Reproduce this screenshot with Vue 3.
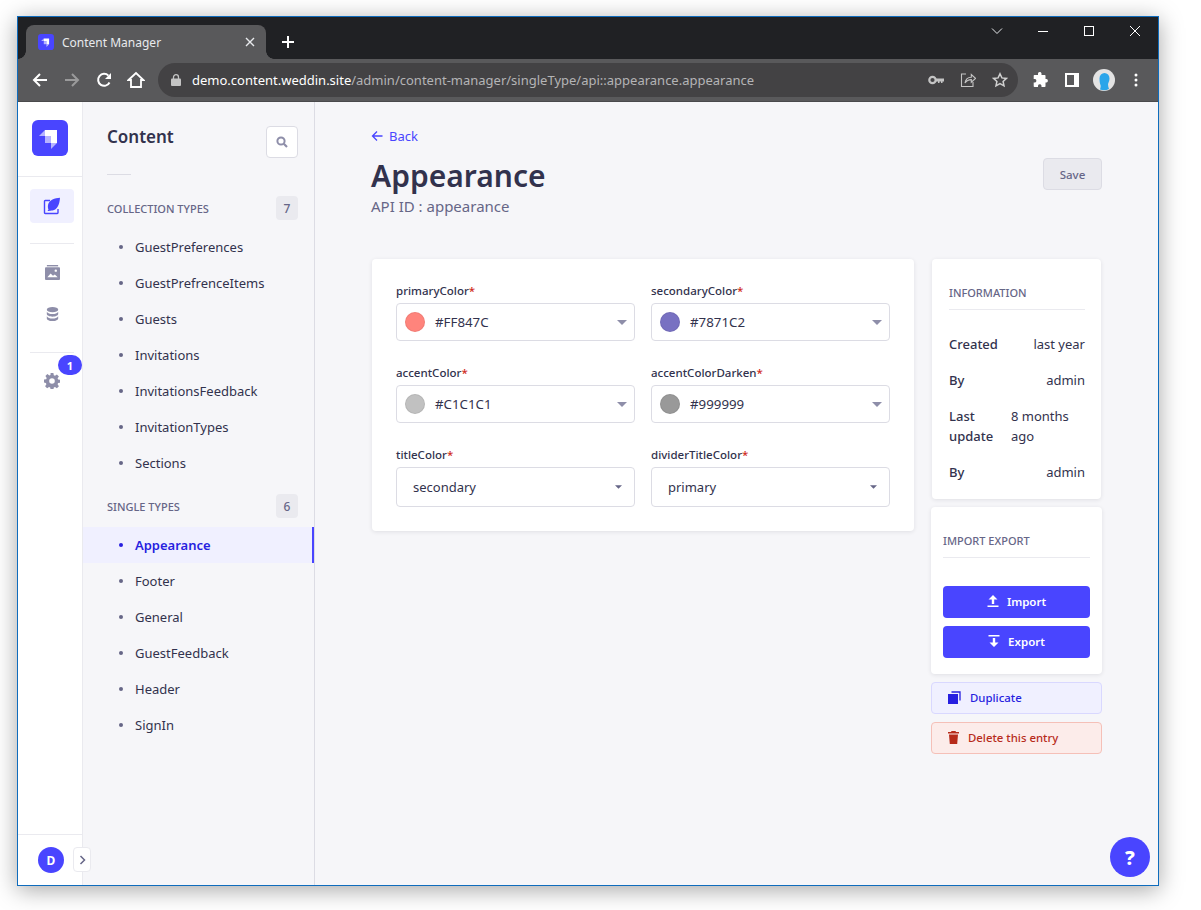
<template>
  <div class="desktop">
    <div class="window">
      <div class="tabstrip">
        <div class="tab">
          <svg class="favicon" width="16" height="16" viewBox="0 0 36 36">
            <rect width="36" height="36" rx="7" fill="#4945ff" />
            <polygon points="13,10 25,10 25,23 19,23 19,16 13,16" fill="#fff" />
            <polygon points="13,10 13,16 7,16" fill="#fff" opacity=".6" />
            <polygon points="13,16 19,16 19,23 13,23" fill="#fff" opacity=".6" />
            <polygon points="19,23 25,23 19,29" fill="#fff" opacity=".6" />
          </svg>
          <span class="tab-title">Content Manager</span>
          <svg class="tab-close" width="10" height="10" viewBox="0 0 10 10"><path d="M1 1l8 8M9 1L1 9" stroke="#e8eaed" stroke-width="1.4" /></svg>
        </div>
        <svg class="new-tab" width="14" height="14" viewBox="0 0 14 14"><path d="M7 1v12M1 7h12" stroke="#fff" stroke-width="2" /></svg>
        <div class="win-controls">
          <span class="win-btn"><svg width="12" height="8" viewBox="0 0 12 8"><path d="M1 1.500l5 5 5-5" fill="none" stroke="#e8eaed" /></svg></span>
          <span class="win-btn"><svg width="12" height="12" viewBox="0 0 12 12"><path d="M1 6.500h10" stroke="#fff" /></svg></span>
          <span class="win-btn"><svg width="12" height="12" viewBox="0 0 12 12"><rect x="1.500" y="1.500" width="9" height="9" fill="none" stroke="#fff" /></svg></span>
          <span class="win-btn"><svg width="12" height="12" viewBox="0 0 12 12"><path d="M1 1l10 10M11 1L1 11" stroke="#fff" /></svg></span>
        </div>
      </div>

      <div class="toolbar">
        <div class="tool-btn">
          <svg width="16" height="16" viewBox="0 0 16 16"><path d="M15 8H2M8 2L2 8l6 6" fill="none" stroke="#fff" stroke-width="2" /></svg>
        </div>
        <div class="tool-btn">
          <svg width="16" height="16" viewBox="0 0 16 16"><path d="M1 8h13M8 2l6 6-6 6" fill="none" stroke="#9a9a9b" stroke-width="2" /></svg>
        </div>
        <div class="tool-btn">
          <svg width="16" height="16" viewBox="0 0 16 16"><path d="M13.500 10.500A6 6 0 1 1 12.400 3.600" fill="none" stroke="#fff" stroke-width="2" /><path d="M15 1v6H9z" fill="#fff" /></svg>
        </div>
        <div class="tool-btn">
          <svg width="18" height="18" viewBox="0 0 18 18"><path d="M1.500 9L9 2l7.500 7H14v7H4V9z" fill="none" stroke="#fff" stroke-width="1.800" /></svg>
        </div>
        <div class="omnibox">
          <svg class="lock" width="10" height="12" viewBox="0 0 10 12"><path d="M2.500 5V3.200a2.500 2.500 0 0 1 5 0V5" fill="none" stroke="#c4c4c4" stroke-width="1.300" /><rect y="4.600" width="10" height="7.400" rx="1" fill="#c4c4c4" /></svg>
          <span class="url"><b>demo.content.weddin.site</b>/admin/content-manager/singleType/api::appearance.appearance</span>
          <span class="omni-icons">
            <svg width="16" height="10" viewBox="0 0 16 10"><circle cx="4.500" cy="5" r="3.200" fill="none" stroke="#c4c4c4" stroke-width="2.200" /><path d="M7 3.500h9v3h-1.500V8H13V6.500h-1.500V8H10V6.500H7z" fill="#c4c4c4" /></svg>
            <svg width="16" height="16" viewBox="0 0 16 16"><path d="M6 2H1.500v12.500H13V10" fill="none" stroke="#c4c4c4" stroke-width="1.100" /><path d="M5 11c.6-3.600 3-5.800 6.300-5.800V2.600l4.200 3.800-4.200 3.800V7.600C8.800 7.600 6.600 8.600 5 11z" fill="none" stroke="#c4c4c4" stroke-width="1.100" /></svg>
            <svg width="16" height="16" viewBox="0 0 16 16"><path d="M8 1.800l1.900 4.100 4.500.5-3.300 3 .9 4.400L8 11.600l-4 2.200.9-4.400-3.300-3 4.500-.5z" fill="none" stroke="#d0d0d0" stroke-width="1.500" /></svg>
          </span>
        </div>
        <div class="tool-btn ext">
          <svg width="16" height="16" viewBox="0 0 16 16"><path d="M6 1.500a1.800 1.800 0 0 1 3.500 0V3h3.200a.8.8 0 0 1 .8.8V7h1a1.800 1.800 0 0 1 0 3.500h-1v3.700a.8.8 0 0 1-.8.8H9.500v-1.300a1.800 1.800 0 0 0-3.500 0V15H2.500a.8.8 0 0 1-.8-.8v-3.700H3A1.800 1.800 0 0 0 3 7H1.700V3.800a.8.8 0 0 1 .8-.8H6z" fill="#fff" /></svg>
        </div>
        <div class="tool-btn">
          <svg width="14" height="14" viewBox="0 0 14 14"><rect x="1" y="1" width="12" height="12" fill="none" stroke="#fff" stroke-width="2" /><rect x="9" y="1" width="4" height="12" fill="#fff" /></svg>
        </div>
        <div class="tool-btn">
          <svg width="22" height="22" viewBox="0 0 22 22"><circle cx="11" cy="11" r="11" fill="#e3e3e3" /><path d="M6.500 9.500a5 5.500 0 0 1 10 0c0 3-1.500 4-1.500 6 0 1.500.5 3 1 4.500a11 11 0 0 1-9 .5c.5-1.500 1-3 .5-4.500-.3-1-1-2.500-1-6.500z" fill="#2aa5ea" /></svg>
        </div>
        <div class="tool-btn">
          <svg width="4" height="14" viewBox="0 0 4 14"><circle cx="2" cy="2" r="1.500" fill="#fff" /><circle cx="2" cy="7" r="1.500" fill="#fff" /><circle cx="2" cy="12" r="1.500" fill="#fff" /></svg>
        </div>
      </div>

      <div class="app">
        <nav class="rail">
          <div class="rail-logo">
            <svg width="36" height="36" viewBox="0 0 36 36">
              <rect width="36" height="36" rx="6" fill="#4945ff" />
              <polygon points="13,10 25,10 25,23 19,23 19,16 13,16" fill="#fff" />
              <polygon points="13,10 13,16 7,16" fill="#fff" opacity=".6" />
              <polygon points="13,16 19,16 19,23 13,23" fill="#fff" opacity=".6" />
              <polygon points="19,23 25,23 19,29" fill="#fff" opacity=".6" />
            </svg>
          </div>
          <div class="rail-main">
            <div class="rail-item active">
              <svg width="18" height="18" viewBox="0 0 18 18">
                <path d="M7 3.500H2.200a.7.7 0 0 0-.7.7v11.600a.7.7 0 0 0 .7.7h12.100a.7.7 0 0 0 .7-.7V12" fill="none" stroke="#4945ff" stroke-width="1.400" />
                <path d="M17 .7C12 1 6 2.500 5 8c-.3 2 0 3.500.5 4.500L4.500 14H6c1-.3 2-.3 3.500-.5C14 12.500 16.500 8 17 .7z" fill="#4945ff" />
              </svg>
            </div>
            <hr class="rail-rule" />
            <div class="rail-item">
              <svg width="15" height="15" viewBox="0 0 16 16">
                <rect x="2" y="0" width="12" height="1.500" fill="#8e8ea9" />
                <rect y="2.500" width="16" height="13.500" rx="1" fill="#8e8ea9" />
                <circle cx="11.500" cy="6" r="1.300" fill="#fff" />
                <path d="M2.500 13l3.500-4 2.500 2.500 2-1.500 3 3z" fill="#fff" />
              </svg>
            </div>
            <div class="rail-item">
              <svg width="13" height="14" viewBox="0 0 14 16">
                <ellipse cx="7" cy="3" rx="6.500" ry="3" fill="#8e8ea9" />
                <path d="M.5 5.500c1 1.800 3.500 2.600 6.500 2.600s5.500-.8 6.500-2.600V8c0 1.700-3 3-6.500 3S.5 9.700.5 8z" fill="#8e8ea9" />
                <path d="M.5 10.500c1 1.800 3.500 2.600 6.500 2.600s5.500-.8 6.500-2.600V13c0 1.700-3 3-6.500 3S.5 14.700.5 13z" fill="#8e8ea9" />
              </svg>
            </div>
            <hr class="rail-rule second" />
            <div class="rail-item settings">
              <svg width="16" height="16" viewBox="0 0 16 16">
                <path fill="#8e8ea9" fill-rule="evenodd" d="M6.600 0h2.800l.4 2.200 1.200.5 1.900-1.300 2 2-1.300 1.900.5 1.200 2.200.4v2.800l-2.200.4-.5 1.200 1.300 1.900-2 2-1.900-1.300-1.200.5-.4 2.200H6.600l-.4-2.200-1.200-.5-1.900 1.300-2-2 1.300-1.900-.5-1.200L0 9.400V6.600l2.200-.4.500-1.200L1.400 3.100l2-2 1.900 1.300 1.200-.5zM8 5.200a2.800 2.800 0 1 0 0 5.600 2.800 2.800 0 0 0 0-5.600z" />
              </svg>
              <span class="rail-badge">1</span>
            </div>
          </div>
          <div class="rail-foot">
            <span class="avatar">D</span>
            <span class="collapse">
              <svg width="7" height="10" viewBox="0 0 7 10"><path d="M1.500 1l4 4-4 4" fill="none" stroke="#666687" stroke-width="1.500" /></svg>
            </span>
          </div>
        </nav>

        <aside class="sidebar">
          <div class="side-head">
            <h2>Content</h2>
            <span class="search">
              <svg width="12" height="12" viewBox="0 0 12 12"><circle cx="5" cy="5" r="3.600" fill="none" stroke="#8e8ea9" stroke-width="2" /><path d="M7.800 7.800L11 11" stroke="#8e8ea9" stroke-width="2.200" /></svg>
            </span>
          </div>
          <div class="side-rule"></div>
          <div class="side-group first">
            <span>COLLECTION TYPES</span><span class="count">7</span>
          </div>
          <ul>
            <li v-for="item in collections" :key="item">{{ item }}</li>
          </ul>
          <div class="side-group">
            <span>SINGLE TYPES</span><span class="count">6</span>
          </div>
          <ul>
            <li v-for="item in singles" :key="item" :class="{ current: item === 'Appearance' }">{{ item }}</li>
          </ul>
        </aside>

        <main class="main">
          <a class="back">
            <svg width="12" height="12" viewBox="0 0 12 12"><path d="M11.500 6H1.500M6 1.500L1.500 6 6 10.500" fill="none" stroke="#4945ff" stroke-width="1.300" /></svg>
            Back
          </a>
          <div class="title-row">
            <div>
              <h1>Appearance</h1>
              <p class="api-id">API ID : appearance</p>
            </div>
            <button class="save">Save</button>
          </div>

          <div class="columns">
            <section class="card form">
              <div v-for="f in fields" :key="f.name" class="field">
                <label>{{ f.name }}<i>*</i></label>
                <div v-if="f.color" class="input">
                  <span class="swatch" :style="{ background: f.color }"></span>
                  <span class="val">{{ f.value }}</span>
                  <svg class="caret" width="10" height="5" viewBox="0 0 10 5"><path d="M0 0h10L5 5z" fill="#8e8ea9" /></svg>
                </div>
                <div v-else class="input select">
                  <span class="val">{{ f.value }}</span>
                  <svg class="caret small" width="7" height="4" viewBox="0 0 8 4"><path d="M0 0h8L4 4z" fill="#666687" /></svg>
                </div>
              </div>
            </section>

            <div class="side-col">
              <section class="card info">
                <h3>INFORMATION</h3>
                <dl>
                  <div v-for="(r, i) in info" :key="i" class="info-row">
                    <dt>{{ r.k }}</dt>
                    <dd :class="{ left: r.wrap }">{{ r.v }}</dd>
                  </div>
                </dl>
              </section>
              <section class="card porter">
                <h3>IMPORT EXPORT</h3>
                <button class="primary">
                  <svg width="12" height="12" viewBox="0 0 12 12"><path d="M6 0l4.500 4.500H7.200V9H4.800V4.500H1.500zM0.500 10.500h11V12H.5z" fill="#fff" /></svg>
                  Import
                </button>
                <button class="primary">
                  <svg width="12" height="12" viewBox="0 0 12 12"><path d="M.5 0h11v1.500H.5zM4.800 3h2.400v4.500h3.300L6 12 1.500 7.500h3.300z" fill="#fff" /></svg>
                  Export
                </button>
              </section>
              <button class="action dup">
                <svg width="13" height="13" viewBox="0 0 13 13"><rect y="3" width="10" height="10" fill="#271fe0" /><path d="M3.500 1h8.500v8.500" fill="none" stroke="#271fe0" stroke-width="1.300" /></svg>
                Duplicate
              </button>
              <button class="action del">
                <svg width="11" height="13" viewBox="0 0 11 13"><path d="M3.500 0h4l.5 1h3v1.500H0V1h3zM1 3.500h9L9.200 13H1.800z" fill="#b72b1a" /></svg>
                Delete this entry
              </button>
            </div>
          </div>
          <span class="help">?</span>
        </main>
      </div>
    </div>
  </div>
</template>

<script setup>
const collections = ['GuestPreferences', 'GuestPrefrenceItems', 'Guests', 'Invitations', 'InvitationsFeedback', 'InvitationTypes', 'Sections']
const singles = ['Appearance', 'Footer', 'General', 'GuestFeedback', 'Header', 'SignIn']

const fields = [
  { name: 'primaryColor', value: '#FF847C', color: '#ff847c' },
  { name: 'secondaryColor', value: '#7871C2', color: '#7871c2' },
  { name: 'accentColor', value: '#C1C1C1', color: '#c1c1c1' },
  { name: 'accentColorDarken', value: '#999999', color: '#999999' },
  { name: 'titleColor', value: 'secondary' },
  { name: 'dividerTitleColor', value: 'primary' }
]

const info = [
  { k: 'Created', v: 'last year' },
  { k: 'By', v: 'admin' },
  { k: 'Last update', v: '8 months ago', wrap: true },
  { k: 'By', v: 'admin' }
]
</script>

<style>
html, body { margin: 0; background: #fff; overflow: hidden; }
</style>

<style scoped>
* { box-sizing: border-box; }
.desktop {
  width: 1201px; height: 910px; padding: 16px 0 0 17px;
  font-family: "Noto Sans", "Open Sans", sans-serif; color: #32324d;
}
.window {
  width: 1142px; height: 870px; border: 1px solid #0f6cbd; display: flex; flex-direction: column;
  box-shadow: 0 4px 22px rgba(0,0,0,0.35); background: #f6f6f9; overflow: hidden;
}

.tabstrip { height: 42px; background: #202124; display: flex; align-items: flex-end; padding-left: 8px; flex: none; position: relative; }
.tab {
  width: 240px; height: 34px; background: #59595b; border-radius: 8px 8px 0 0;
  display: flex; align-items: center; padding: 0 12px; color: #e8eaed; position: relative;
}
.tab::before, .tab::after { content: ""; position: absolute; bottom: 0; width: 8px; height: 8px; }
.tab::before { left: -8px; background: radial-gradient(circle at 0 0, transparent 7.5px, #59595b 8px); }
.tab::after { right: -8px; background: radial-gradient(circle at 100% 0, transparent 7.5px, #59595b 8px); }
.favicon { flex: none; }
.tab-title { font-size: 12px; margin-left: 8px; flex: 1; }
.tab-close { flex: none; margin-right: -1px; }
.new-tab { margin: 0 0 10px 15px; }
.win-controls { margin-left: auto; align-self: flex-start; display: flex; }
.win-btn { width: 46px; height: 28px; display: flex; align-items: center; justify-content: center; }

.toolbar { height: 43px; background: #59595b; display: flex; align-items: center; padding: 0 6px; flex: none; border-bottom: 1px solid #4a4a4c; }
.tool-btn { width: 32px; height: 32px; display: flex; align-items: center; justify-content: center; flex: none; }
.omnibox {
  width: 860px; height: 34px; background: #434244; border-radius: 17px; margin: 0 6px;
  display: flex; align-items: center; padding-left: 13px; flex: none;
}
.lock { flex: none; }
.url { font-size: 13px; color: #b4b4b6; margin-left: 11px; white-space: nowrap; }
.url b { color: #fff; font-weight: 400; }
.omni-icons { margin-left: auto; display: flex; align-items: center; gap: 16px; padding-right: 10px; }

.app { flex: 1; display: flex; min-height: 0; }
.rail { width: 65px; background: #fff; border-right: 1px solid #eaeaef; display: flex; flex-direction: column; flex: none; }
.rail-logo { height: 75px; padding: 18px 14px 0; border-bottom: 1px solid #eaeaef; }
.rail-logo svg { display: block; }
.rail-main { flex: 1; padding: 12px 8px 0 12px; }
.rail-item { height: 34px; border-radius: 4px; display: flex; align-items: center; justify-content: center; position: relative; margin-bottom: 8px; }
.rail-item.active { background: #f0f0ff; }
.rail-rule { border: 0; height: 1px; background: #eaeaef; margin: 20px 0 11px; }
.rail-rule.second { margin: 21px 0 11px; }
.rail-badge {
  position: absolute; left: 28px; top: -9px; width: 24px; height: 20px; border-radius: 10px;
  background: #4945ff; color: #fff; font-size: 11px; font-weight: 700; display: flex; align-items: center; justify-content: center;
}
.rail-foot { height: 51px; border-top: 1px solid #eaeaef; padding: 12px 0 0 20px; position: relative; }
.avatar {
  width: 26px; height: 26px; border-radius: 50%; background: #4945ff; color: #fff;
  font-size: 12px; font-weight: 700; display: flex; align-items: center; justify-content: center;
}
.collapse {
  position: absolute; left: 55px; top: 12px; width: 18px; height: 25px; background: #fff;
  border: 1px solid #eaeaef; border-radius: 4px; display: flex; align-items: center; justify-content: center;
}

.sidebar { width: 232px; background: #f6f6f9; border-right: 1px solid #dcdce4; flex: none; }
.side-head { display: flex; justify-content: space-between; padding: 24px 16px 0 24px; }
.side-head h2 { margin: 0; font-size: 17px; font-weight: 600; line-height: 22px; }
.search {
  width: 32px; height: 32px; background: #fff; border: 1px solid #dcdce4; border-radius: 4px;
  display: flex; align-items: center; justify-content: center;
}
.side-rule { width: 24px; height: 1px; background: #dcdce4; margin: 16px 0 0 24px; }
.side-group {
  display: flex; justify-content: space-between; align-items: center; padding: 0 16px 0 24px; height: 24px;
  font-size: 11px; font-weight: 500; color: #666687; margin-top: 13px;
}
.side-group.first { margin-top: 21px; }
.count {
  width: 22px; height: 24px; background: #eaeaef; border-radius: 4px; display: flex; align-items: center; justify-content: center;
  font-size: 12px; color: #666687;
}
.sidebar ul { list-style: none; margin: 9px 0 0; padding: 0; }
.sidebar li { height: 36px; font-size: 13px; color: #32324d; display: flex; align-items: center; padding-left: 52px; position: relative; }
.sidebar li::before {
  content: ""; position: absolute; left: 36px; top: 16px; width: 4px; height: 4px; border-radius: 50%; background: #666687;
}
.sidebar li.current { background: #f0f0ff; border-right: 2px solid #4945ff; color: #271fe0; font-weight: 600; }
.sidebar li.current::before { background: #271fe0; }

.main { flex: 1; padding: 24px 56px 0; position: relative; min-width: 0; }
.back { display: flex; align-items: center; gap: 6px; color: #4945ff; font-size: 13px; height: 20px; }
.title-row { display: flex; justify-content: space-between; align-items: flex-start; margin-top: 10px; }
h1 { margin: 0; font-size: 30px; font-weight: 600; line-height: 40px; color: #32324d; }
.api-id { margin: 0; font-size: 15px; line-height: 20px; color: #666687; }
.save {
  width: 59px; height: 32px; margin-top: 2px; border: 1px solid #dcdce4; background: #eaeaef; border-radius: 4px;
  color: #666687; font: 500 11.5px "Noto Sans", sans-serif;
}
.columns { display: grid; grid-template-columns: 1fr 171px; gap: 16px; margin-top: 43px; align-items: start; }
.card { background: #fff; border-radius: 4px; box-shadow: 0 1px 4px rgba(33,33,52,0.1); }
.form { margin: 0 1px; padding: 24px; display: grid; grid-template-columns: 1fr 1fr; gap: 24px 16px; height: 272px; }
.field label { display: block; font-size: 11.5px; font-weight: 500; line-height: 16px; margin: 0 0 4px; color: #32324d; }
.field label i { color: #d02b20; font-style: normal; }
.input {
  height: 38px; border: 1px solid #dcdce4; border-radius: 4px; background: #fff; display: flex; align-items: center;
  padding: 0 8px; position: relative;
}
.input.select { height: 40px; padding-left: 16px; }
.swatch { width: 20px; height: 20px; border-radius: 50%; flex: none; box-shadow: inset 0 0 0 1px rgba(0,0,0,0.06); }
.val { font-size: 13.3px; margin-left: 10px; color: #32324d; }
.select .val { margin-left: 0; font-size: 13px; color: #32324d; }
.caret { margin-left: auto; margin-right: 0; }
.input .caret { margin-right: -1px; }
.input .caret.small { margin-right: 4px; }

.side-col { display: flex; flex-direction: column; gap: 8px; }
.card h3 { margin: 0; font-size: 11px; font-weight: 500; color: #666687; line-height: 16px; }
.info { margin: 0 1px; height: 240px; padding: 26px 16px 0 17px; }
.info h3 { padding-bottom: 8px; border-bottom: 1px solid #eaeaef; }
dl { margin: 24px 0 0; }
.info-row { display: flex; justify-content: space-between; margin-bottom: 16px; font-size: 13px; line-height: 20px; }
dt { font-weight: 500; width: 55px; flex: none; color: #32324d; }
dd { margin: 0; color: #32324d; text-align: right; }
dd.left { text-align: left; width: 74px; }
.porter { height: 167px; padding: 26px 12px 0; }
.porter h3 { padding-bottom: 8px; border-bottom: 1px solid #eaeaef; margin-bottom: 28px; }
.primary {
  width: 100%; height: 32px; background: #4945ff; color: #fff; border: 0; border-radius: 4px; margin-bottom: 8px;
  font: 600 11.5px "Noto Sans", sans-serif; display: flex; align-items: center; justify-content: center; gap: 8px; padding: 0 0 2px;
}
.action {
  height: 32px; border-radius: 4px; display: flex; align-items: center; gap: 9px; padding: 0 16px 2px;
  font: 500 11.4px "Noto Sans", sans-serif;
}
.dup { background: #f0f0ff; border: 1px solid #d9d8ff; color: #271fe0; }
.del { background: #fcecea; border: 1px solid #f5c0b8; color: #b72b1a; }
.help {
  position: absolute; right: 8px; bottom: 8px; width: 40px; height: 40px; border-radius: 50%; background: #4945ff; color: #fff;
  font: 800 20px "Noto Sans", sans-serif; display: flex; align-items: center; justify-content: center;
}
</style>
